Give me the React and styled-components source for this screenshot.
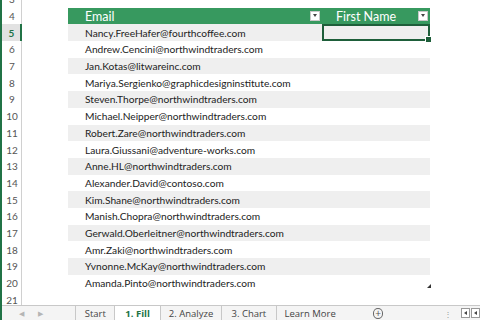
import React from 'react';
import styled, { createGlobalStyle } from 'styled-components';

const GlobalStyle = createGlobalStyle`
  html, body {
    margin: 0;
    padding: 0;
    background: #fff;
    overflow: hidden;
  }
  body {
    font-family: Lato, "Open Sans", "Liberation Sans", sans-serif;
  }
`;

const ROW_H = 16.7;

const Frame = styled.div`
  width: 480px;
  height: 320px;
  display: flex;
  flex-direction: column;
  border-left: 2px solid #217346;
  box-sizing: border-box;
  overflow: hidden;
`;

const Sheet = styled.div`
  flex: 1;
  overflow: hidden;
  position: relative;
`;

const Rows = styled.div`
  margin-top: -9px;
  display: flex;
  flex-direction: column;
`;

const Row = styled.div`
  display: flex;
  height: ${ROW_H}px;
  flex-shrink: 0;
`;

const RowHeader = styled.div`
  width: 20px;
  flex-shrink: 0;
  box-sizing: border-box;
  display: flex;
  align-items: center;
  justify-content: center;
  font-size: 10px;
  color: ${(p) => (p.$active ? '#217346' : '#555')};
  font-weight: ${(p) => (p.$active ? 700 : 400)};
  background: ${(p) => (p.$active ? '#e2e2e2' : '#fff')};
  border-right: ${(p) => (p.$active ? '2px solid #217346' : '1px solid #d0d0d0')};
  padding-left: 1px;
`;

const Gap = styled.div`
  width: 46px;
  flex-shrink: 0;
`;

const Cell = styled.div`
  position: relative;
  width: ${(p) => p.$w}px;
  flex-shrink: 0;
  box-sizing: border-box;
  display: flex;
  align-items: center;
  font-size: 10.2px;
  color: #222;
  padding-left: ${(p) => p.$pad ?? 17}px;
  background: ${(p) => (p.$band ? '#efefef' : 'transparent')};
  white-space: nowrap;
`;

const HeadCell = styled(Cell)`
  background: #37995f;
  color: #fff;
  font-size: 12.5px;
  justify-content: ${(p) => (p.$center ? 'center' : 'flex-start')};
  padding-right: ${(p) => (p.$center ? 20 : 0)}px;
`;

const FilterButton = styled.div`
  position: absolute;
  right: 2px;
  top: 3px;
  width: 10px;
  height: 10px;
  background: #fff;
  border: 1px solid #c8c8c8;
  box-sizing: border-box;
  display: flex;
  align-items: center;
  justify-content: center;

  &::after {
    content: '';
    border-left: 2.5px solid transparent;
    border-right: 2.5px solid transparent;
    border-top: 3px solid #444;
  }
`;

const Selection = styled.div`
  position: absolute;
  inset: 0;
  border: 2px solid #1e5e3a;

  &::after {
    content: '';
    position: absolute;
    right: -4px;
    bottom: -4px;
    width: 5px;
    height: 5px;
    background: #1e5e3a;
    border: 1px solid #fff;
  }
`;

const ResizeMark = styled.div`
  position: absolute;
  left: 425px;
  top: 284px;
  width: 0;
  height: 0;
  border-left: 4px solid transparent;
  border-bottom: 4px solid #333;
`;

const TabBar = styled.div`
  height: 14px;
  flex-shrink: 0;
  display: flex;
  align-items: stretch;
  border-top: 1px solid #c8c8c8;
  background: #f4f4f4;
  font-family: "Open Sans", "Liberation Sans", sans-serif;
  font-size: 9.5px;
  color: #444;
`;

const NavArrows = styled.div`
  width: 75px;
  box-sizing: border-box;
  display: flex;
  align-items: center;
  gap: 14px;
  padding-left: 17px;
  color: #b5b5b5;
  font-size: 7px;
`;

const Tab = styled.div`
  display: flex;
  align-items: center;
  justify-content: center;
  width: ${(p) => p.$w}px;
  border-left: 1px solid #c8c8c8;
  background: ${(p) => (p.$active ? '#fff' : 'transparent')};
  color: ${(p) => (p.$active ? '#217346' : '#444')};
  font-weight: ${(p) => (p.$active ? 700 : 400)};
  white-space: nowrap;

  &:last-of-type {
    border-right: 1px solid #c8c8c8;
  }
`;

const AddSheet = styled.div`
  width: 11px;
  height: 11px;
  border: 1px solid #666;
  border-radius: 50%;
  box-sizing: border-box;
  align-self: center;
  margin-left: 29px;
  display: flex;
  align-items: center;
  justify-content: center;
  font-size: 10px;
  line-height: 1;
  color: #555;
`;

const Dots = styled.div`
  align-self: center;
  margin-left: 61px;
  color: #999;
  font-size: 8px;
`;

const ScrollBox = styled.div`
  align-self: center;
  width: 9px;
  height: 10px;
  margin-left: ${(p) => p.$ml}px;
  border: 1px solid #999;
  box-sizing: border-box;
  background: #fff;
  display: flex;
  align-items: center;
  justify-content: center;

  &::after {
    content: '';
    border-top: 2.5px solid transparent;
    border-bottom: 2.5px solid transparent;
    border-right: 3px solid #444;
  }
`;

const emails = [
  'Nancy.FreeHafer@fourthcoffee.com',
  'Andrew.Cencini@northwindtraders.com',
  'Jan.Kotas@litwareinc.com',
  'Mariya.Sergienko@graphicdesigninstitute.com',
  'Steven.Thorpe@northwindtraders.com',
  'Michael.Neipper@northwindtraders.com',
  'Robert.Zare@northwindtraders.com',
  'Laura.Giussani@adventure-works.com',
  'Anne.HL@northwindtraders.com',
  'Alexander.David@contoso.com',
  'Kim.Shane@northwindtraders.com',
  'Manish.Chopra@northwindtraders.com',
  'Gerwald.Oberleitner@northwindtraders.com',
  'Amr.Zaki@northwindtraders.com',
  'Yvnonne.McKay@northwindtraders.com',
  'Amanda.Pinto@northwindtraders.com',
];

const tabs = [
  { name: 'Start', w: 39 },
  { name: '1. Fill', w: 46, active: true },
  { name: '2. Analyze', w: 62 },
  { name: '3. Chart', w: 55 },
  { name: 'Learn More', w: 69 },
];

export default function App() {
  return (
    <>
      <GlobalStyle />
      <Frame>
        <Sheet>
          <Rows>
            <Row>
              <RowHeader>3</RowHeader>
            </Row>
            <Row>
              <RowHeader>4</RowHeader>
              <Gap />
              <HeadCell $w={254}>
                Email
                <FilterButton />
              </HeadCell>
              <HeadCell $w={108} $pad={0} $center>
                First Name
                <FilterButton />
              </HeadCell>
            </Row>
            {emails.map((email, i) => {
              const n = i + 5;
              const band = i % 2 === 0;
              return (
                <Row key={n}>
                  <RowHeader $active={n === 5}>{n}</RowHeader>
                  <Gap />
                  <Cell $w={254} $band={band}>{email}</Cell>
                  <Cell $w={108} $band={band}>
                    {n === 5 && <Selection />}
                  </Cell>
                </Row>
              );
            })}
            <Row>
              <RowHeader>21</RowHeader>
            </Row>
          </Rows>
          <ResizeMark />
        </Sheet>
        <TabBar>
          <NavArrows>
            <span>◀</span>
            <span>▶</span>
          </NavArrows>
          {tabs.map((t) => (
            <Tab key={t.name} $w={t.w} $active={t.active}>
              {t.name}
            </Tab>
          ))}
          <AddSheet>+</AddSheet>
          <Dots>⋮</Dots>
          <ScrollBox $ml={9} />
          <ScrollBox $ml={1} />
        </TabBar>
      </Frame>
    </>
  );
}
